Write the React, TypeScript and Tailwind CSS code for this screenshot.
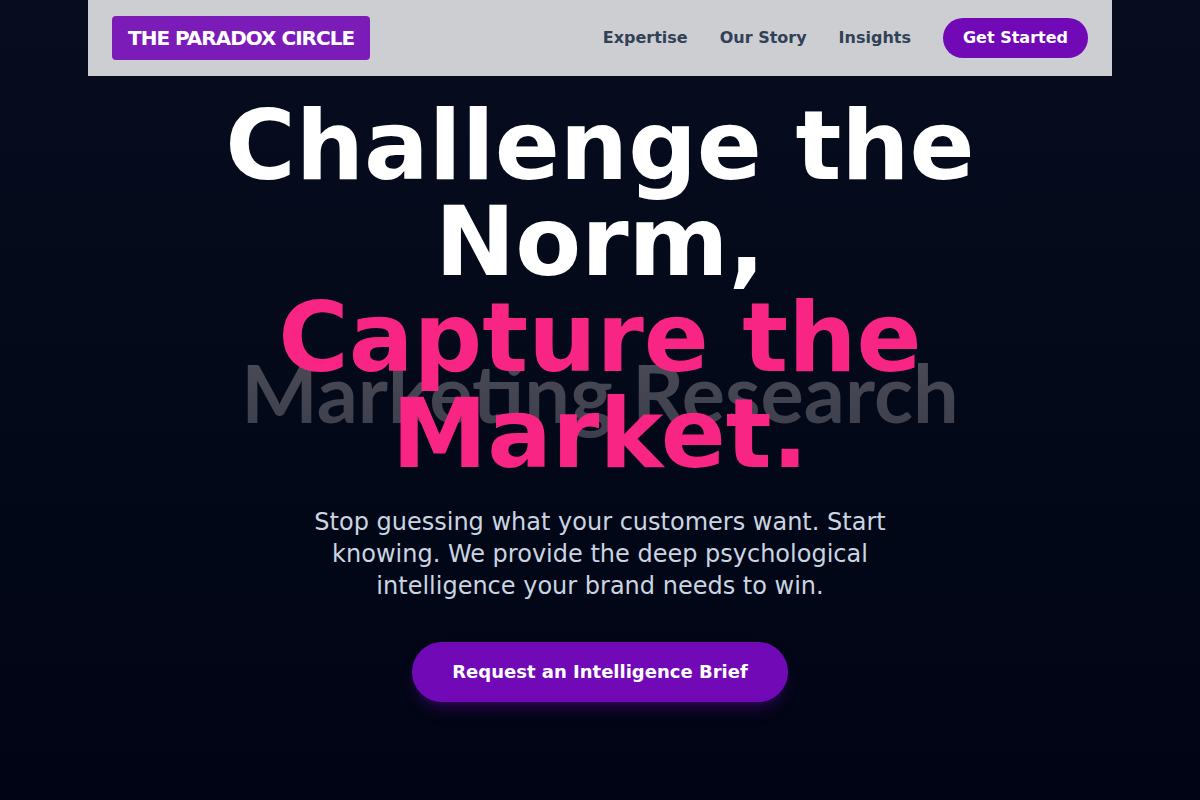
export default function App() {
  return (
    <div className="min-h-screen bg-linear-to-b from-[#070d1f] via-[#030918] to-[#010414] font-['DejaVu_Sans',sans-serif]">
      <header className="mx-auto flex h-19 max-w-5xl items-center justify-between bg-[#cdced2] px-6">
        <a
          href="#"
          className="rounded-sm bg-[#7c1cb8] px-4 py-2 text-xl font-bold tracking-tighter text-white"
        >
          THE PARADOX CIRCLE
        </a>
        <nav className="flex items-center gap-8 font-semibold text-slate-700">
          <a href="#expertise">Expertise</a>
          <a href="#story">Our Story</a>
          <a href="#insights">Insights</a>
          <button className="rounded-full bg-[#7209b7] px-5 py-2 font-semibold text-white">
            Get Started
          </button>
        </nav>
      </header>
      <main className="relative flex flex-col items-center px-6 pt-[22px] pb-24 text-center">
        <div
          aria-hidden="true"
          className="absolute inset-x-0 top-[275px] bg-linear-to-b from-[#4a4b57] to-[#3c3d4a] bg-clip-text pb-4 font-[Lato,sans-serif] text-[81px] leading-none font-bold text-transparent"
        >
          Marketing Research
        </div>
        <h1 className="relative max-w-4xl text-8xl leading-none font-bold text-white">
          Challenge the Norm,
          <br />
          <span className="text-[#f92585]">Capture the Market.</span>
        </h1>
        <p className="relative mt-6 max-w-2xl px-4 text-2xl text-slate-300">
          Stop guessing what your customers want. Start knowing. We provide the deep psychological
          intelligence your brand needs to win.
        </p>
        <button className="relative mt-10 rounded-full bg-[#7209b7] px-10 py-4 text-lg font-bold text-white shadow-lg shadow-[#7209b7]/30">
          Request an Intelligence Brief
        </button>
      </main>
    </div>
  );
}
